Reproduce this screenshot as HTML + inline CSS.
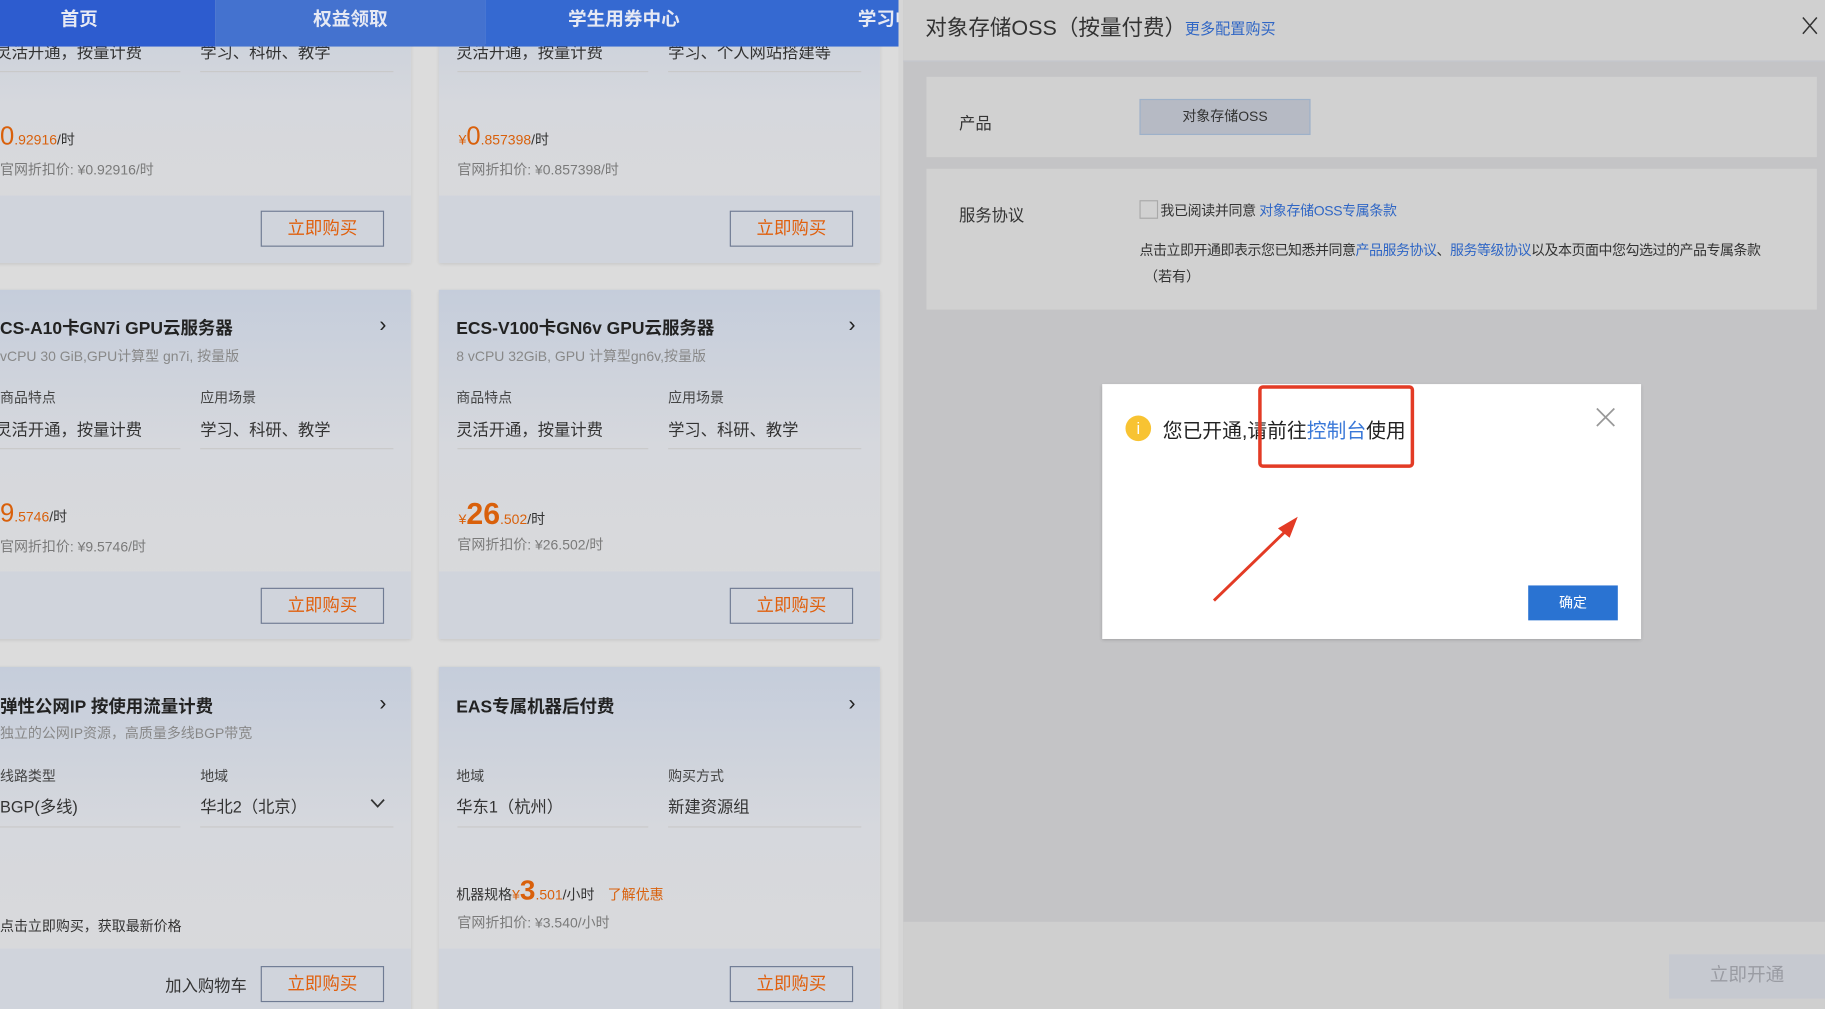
<!DOCTYPE html>
<html><head><meta charset="utf-8"><style>
*{margin:0;padding:0;box-sizing:border-box}
html,body{width:1825px;height:1009px;overflow:hidden;background:#dcdcdc}
#s{width:1568px;height:867px;transform:scale(1.16390);transform-origin:0 0;position:relative;font-family:"Liberation Sans","Noto Sans CJK SC",sans-serif;color:#333;overflow:hidden;background:#dcdcdc}
.a{position:absolute;white-space:nowrap}
.card{position:absolute;background:linear-gradient(#c5cddb,#d6d8dd 45%,#dadada);box-shadow:0 1px 3px rgba(0,0,0,.12)}
.foot{position:absolute;left:0;right:0;bottom:0;height:58px;background:#d0d4dc}
.btn{position:absolute;width:106px;height:31px;border:1px solid #6f7b93;color:#e0600e;font-size:15px;text-align:center;line-height:29px}
.t{font-size:15px;font-weight:bold;color:#222}
.sub{font-size:12px;color:#888}
.lab{font-size:12px;color:#444}
.val{font-size:14px;color:#333}
.ln{position:absolute;height:1px;background:#c9c9c9}
.or{color:#d9600b}
.g{font-size:12px;color:#7a7a7a}
.arr{position:absolute;font-size:18px;color:#222}
.nav{position:absolute;top:0;height:40px;color:#e6e9f4;font-size:16px;font-weight:bold;text-align:center;line-height:36px;white-space:nowrap;overflow:hidden}
.bl{color:#2f66c5}
</style></head><body><div id="s">
<div class="card" style="left:-10px;top:-20px;width:363px;height:246px"><div class="foot"></div></div>
<div class="card" style="left:377px;top:-20px;width:379px;height:246px"><div class="foot"></div></div>
<div class="a val" style="left:-4px;top:35px">灵活开通，按量计费</div><div class="a val" style="left:172px;top:35px">学习、科研、教学</div>
<div class="a val" style="left:392px;top:35px">灵活开通，按量计费</div><div class="a val" style="left:574px;top:35px">学习、个人网站搭建等</div>
<div class="ln" style="left:0;top:61px;width:155px"></div><div class="ln" style="left:172px;top:61px;width:166px"></div>
<div class="ln" style="left:393px;top:61px;width:164px"></div><div class="ln" style="left:574px;top:61px;width:166px"></div>
<div class="a or" style="left:0;top:104px;font-size:22px">0<span style="font-size:12px">.92916</span><span style="font-size:12px;color:#333">/时</span></div>
<div class="a g" style="left:0;top:137px">官网折扣价: ¥0.92916/时</div>
<div class="a or" style="left:394px;top:104px;font-size:22px"><span style="font-size:12px">¥</span>0<span style="font-size:12px">.857398</span><span style="font-size:12px;color:#333">/时</span></div>
<div class="a g" style="left:393px;top:137px">官网折扣价: ¥0.857398/时</div>
<div class="btn" style="left:224px;top:181px">立即购买</div><div class="btn" style="left:627px;top:181px">立即购买</div>
<div class="card" style="left:-10px;top:249px;width:363px;height:300px"><div class="foot"></div></div>
<div class="card" style="left:377px;top:249px;width:379px;height:300px"><div class="foot"></div></div>
<div class="a t" style="left:0;top:271px">CS-A10卡GN7i GPU云服务器</div><div class="arr" style="left:326px;top:269px">›</div>
<div class="a sub" style="left:0;top:297px">vCPU 30 GiB,GPU计算型 gn7i, 按量版</div>
<div class="a lab" style="left:0;top:333px">商品特点</div><div class="a lab" style="left:172px;top:333px">应用场景</div>
<div class="a val" style="left:-4px;top:359px">灵活开通，按量计费</div><div class="a val" style="left:172px;top:359px">学习、科研、教学</div>
<div class="ln" style="left:0;top:385px;width:155px"></div><div class="ln" style="left:172px;top:385px;width:166px"></div>
<div class="a or" style="left:0;top:428px;font-size:22px">9<span style="font-size:12px">.5746</span><span style="font-size:12px;color:#333">/时</span></div>
<div class="a g" style="left:0;top:461px">官网折扣价: ¥9.5746/时</div>
<div class="a t" style="left:392px;top:271px">ECS-V100卡GN6v GPU云服务器</div><div class="arr" style="left:729px;top:269px">›</div>
<div class="a sub" style="left:392px;top:297px">8 vCPU 32GiB, GPU 计算型gn6v,按量版</div>
<div class="a lab" style="left:392px;top:333px">商品特点</div><div class="a lab" style="left:574px;top:333px">应用场景</div>
<div class="a val" style="left:392px;top:359px">灵活开通，按量计费</div><div class="a val" style="left:574px;top:359px">学习、科研、教学</div>
<div class="ln" style="left:393px;top:385px;width:164px"></div><div class="ln" style="left:574px;top:385px;width:166px"></div>
<div class="a or" style="left:394px;top:426px;font-size:26px;font-weight:bold"><span style="font-size:12px;font-weight:normal">¥</span>26<span style="font-size:12px;font-weight:normal">.502</span><span style="font-size:12px;font-weight:normal;color:#333">/时</span></div>
<div class="a g" style="left:393px;top:459px">官网折扣价: ¥26.502/时</div>
<div class="btn" style="left:224px;top:505px">立即购买</div><div class="btn" style="left:627px;top:505px">立即购买</div>
<div class="card" style="left:-10px;top:573px;width:363px;height:310px"><div class="foot" style="bottom:16px;height:52px"></div></div>
<div class="card" style="left:377px;top:573px;width:379px;height:310px"><div class="foot" style="bottom:16px;height:52px"></div></div>
<div class="a t" style="left:0;top:596px">弹性公网IP 按使用流量计费</div><div class="arr" style="left:326px;top:594px">›</div>
<div class="a sub" style="left:0;top:621px">独立的公网IP资源，高质量多线BGP带宽</div>
<div class="a lab" style="left:0;top:658px">线路类型</div><div class="a lab" style="left:172px;top:658px">地域</div>
<div class="a val" style="left:0;top:683px">BGP(多线)</div><div class="a val" style="left:172px;top:683px">华北2（北京）</div>
<svg class="a" style="left:318px;top:686px" width="13" height="9"><path d="M1 1L6.5 7L12 1" stroke="#333" stroke-width="1.5" fill="none"/></svg>
<div class="ln" style="left:0;top:710px;width:155px"></div><div class="ln" style="left:172px;top:710px;width:166px"></div>
<div class="a lab" style="left:0;top:787px;color:#333">点击立即购买，获取最新价格</div>
<div class="a val" style="left:142px;top:837px">加入购物车</div>
<div class="a t" style="left:392px;top:596px">EAS专属机器后付费</div><div class="arr" style="left:729px;top:594px">›</div>
<div class="a lab" style="left:392px;top:658px">地域</div><div class="a lab" style="left:574px;top:658px">购买方式</div>
<div class="a val" style="left:392px;top:683px">华东1（杭州）</div><div class="a val" style="left:574px;top:683px">新建资源组</div>
<div class="ln" style="left:393px;top:710px;width:164px"></div><div class="ln" style="left:574px;top:710px;width:166px"></div>
<div class="a lab" style="left:392px;top:752px;color:#333">机器规格<span class="or">¥<span style="font-size:24px;font-weight:bold">3</span>.501</span>/小时 <span class="or" style="margin-left:8px">了解优惠</span></div>
<div class="a g" style="left:393px;top:784px">官网折扣价: ¥3.540/小时</div>
<div class="btn" style="left:224px;top:830px">立即购买</div><div class="btn" style="left:627px;top:830px">立即购买</div>
<div class="nav" style="left:0;width:185px;background:#2d5ccf;text-align:left;padding-left:52px">首页</div>
<div class="nav" style="left:185px;width:232px;background:#4472cf">权益领取</div>
<div class="nav" style="left:417px;width:355px;background:#3569d1;text-align:left;padding-left:71px">学生用券中心<span style="position:absolute;left:320px">学习中</span></div>
<div class="a" style="left:772px;top:0;width:796px;height:867px;background:#c4c4c6;border-left:4px solid #d6d6d6"></div>
<div class="a" style="left:776px;top:0;width:792px;height:53px;background:#d0d0d0;border-bottom:1px solid #c2c4cc"></div>
<div class="a" style="left:795px;top:10px;font-size:18.5px;color:#333">对象存储OSS（按量付费）</div>
<div class="a bl" style="left:1018px;top:14px;font-size:13px">更多配置购买</div>
<svg class="a" style="left:1548px;top:14px" width="14" height="16"><path d="M1 1L13 15M13 1L1 15" stroke="#333" stroke-width="1.3"/></svg>
<div class="a" style="left:796px;top:66px;width:765px;height:69px;background:#d1d1d1"></div>
<div class="a" style="left:824px;top:96px;font-size:14px">产品</div>
<div class="a" style="left:979px;top:85px;width:147px;height:31px;background:#b6bac4;border:1px solid #9db1c9;font-size:12px;text-align:center;line-height:29px">对象存储OSS</div>
<div class="a" style="left:796px;top:145px;width:765px;height:121px;background:#d1d1d1"></div>
<div class="a" style="left:824px;top:175px;font-size:14px">服务协议</div>
<div class="a" style="left:979px;top:172px;width:16px;height:16px;border:1px solid #a9a9a9"></div>
<div class="a" style="left:997px;top:172px;font-size:12px;letter-spacing:-0.3px">我已阅读并同意 <span class="bl">对象存储OSS专属条款</span></div>
<div class="a" style="left:979px;top:206px;font-size:12px;letter-spacing:-0.4px">点击立即开通即表示您已知悉并同意<span class="bl">产品服务协议</span>、<span class="bl">服务等级协议</span>以及本页面中您勾选过的产品专属条款</div>
<div class="a" style="left:983px;top:229px;font-size:12px">（若有）</div>
<div class="a" style="left:776px;top:792px;width:792px;height:75px;background:#cfcfcf"></div>
<div class="a" style="left:1434px;top:820px;width:134px;height:38px;background:#c6c9d0;color:#9a9ca3;font-size:16px;text-align:center;line-height:38px">立即开通</div>
<div class="a" style="left:947px;top:330px;width:463px;height:219px;background:#fff;box-shadow:0 1px 3px rgba(0,0,0,.2)"></div>
<div class="a" style="left:967px;top:357px;width:22px;height:22px;border-radius:50%;background:#f8c332;color:#fff;font-size:14px;text-align:center;line-height:22px">i</div>
<div class="a" style="left:999px;top:356px;font-size:17px;color:#222">您已开通,请前往<span style="color:#3a78d8">控制台</span>使用</div>
<div class="a" style="left:1081px;top:331px;width:134px;height:71px;border:3px solid #e33b25;border-radius:4px"></div>
<svg class="a" style="left:1370px;top:349px" width="19" height="19"><path d="M2 2L17 17M17 2L2 17" stroke="#999" stroke-width="1.5"/></svg>
<svg class="a" style="left:1040px;top:440px" width="80" height="80"><path d="M3 76L67 14" stroke="#e33b25" stroke-width="2.5"/><path d="M75 4L58 14L68 22Z" fill="#e33b25"/></svg>
<div class="a" style="left:1313px;top:503px;width:77px;height:30px;background:#2a73d2;color:#fff;font-size:12px;text-align:center;line-height:30px">确定</div>
</div></body></html>
